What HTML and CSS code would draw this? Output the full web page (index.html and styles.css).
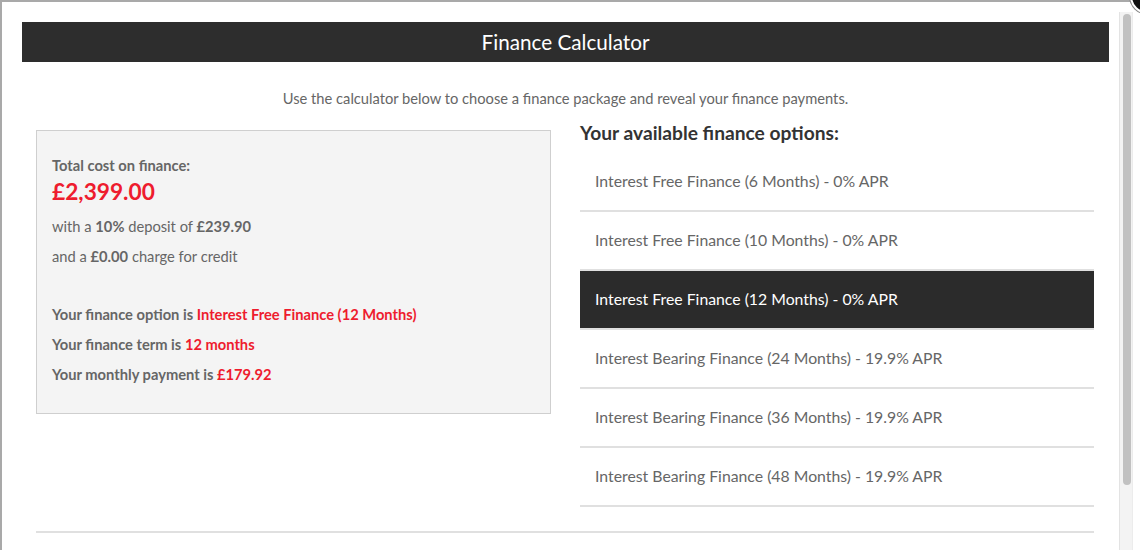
FILE: index.html
```html
<!DOCTYPE html>
<html lang="en">
<head>
<meta charset="utf-8">
<title>Finance Calculator</title>
<link rel="stylesheet" href="styles.css">
</head>
<body>
<div class="frame">
  <div class="content">
    <h1 class="title-bar">Finance Calculator</h1>
    <p class="intro">Use the calculator below to choose a finance package and reveal your finance payments.</p>
    <div class="calc">
      <div class="summary">
        <p class="label">Total cost on finance:</p>
        <p class="total">£2,399.00</p>
        <p class="line">with a <b>10%</b> deposit of <b>£239.90</b></p>
        <p class="line">and a <b>£0.00</b> charge for credit</p>
        <div class="details">
          <p class="line strong">Your finance option is <span class="red">Interest Free Finance (12 Months)</span></p>
          <p class="line strong">Your finance term is <span class="red">12 months</span></p>
          <p class="line strong">Your monthly payment is <span class="red">£179.92</span></p>
        </div>
      </div>
      <div class="options">
        <h2 class="options-title">Your available finance options:</h2>
        <ul class="option-list">
          <li class="option">Interest Free Finance (6 Months) - 0% APR</li>
          <li class="option">Interest Free Finance (10 Months) - 0% APR</li>
          <li class="option selected">Interest Free Finance (12 Months) - 0% APR</li>
          <li class="option">Interest Bearing Finance (24 Months) - 19.9% APR</li>
          <li class="option">Interest Bearing Finance (36 Months) - 19.9% APR</li>
          <li class="option">Interest Bearing Finance (48 Months) - 19.9% APR</li>
        </ul>
      </div>
    </div>
    <hr class="divider">
  </div>
  <div class="scrollbar"><div class="thumb"></div></div>
</div>
<div class="close"></div>
</body>
</html>
```

FILE: styles.css
```css
html, body {
  margin: 0;
  padding: 0;
  width: 1140px;
  height: 550px;
  overflow: hidden;
  background: #ffffff;
  font-family: Lato, "Open Sans", "Liberation Sans", sans-serif;
}

.frame {
  display: flex;
  height: 548px;
  border-top: 2px solid #a9a9a9;
  border-left: 2px solid #a9a9a9;
  background: #ffffff;
}

.content {
  width: 1087px;
  padding: 20px 10px 0 20px;
}

.title-bar {
  margin: 0;
  height: 40px;
  line-height: 40px;
  background: #2d2d2d;
  color: #ffffff;
  font-size: 20.7px;
  font-weight: 400;
  text-align: center;
}

.intro {
  margin: 26px 0 0;
  line-height: 20px;
  font-size: 14.7px;
  color: #666666;
  text-align: center;
}

.calc {
  display: grid;
  grid-template-columns: 515px 514px;
  column-gap: 29px;
  align-items: start;
  margin: 13px 15px 0 14px;
}

.summary {
  margin-top: 9px;
  background: #f4f4f4;
  border: 1px solid #cfcfcf;
  padding: 24px 15px 24px 15px;
  color: #666666;
  font-size: 14.7px;
}

.summary p {
  margin: 0;
}

.label {
  line-height: 20px;
  font-weight: 700;
}

.total {
  line-height: 28px;
  margin-top: 3px !important;
  margin-bottom: 5px !important;
  font-size: 22.7px;
  font-weight: 700;
  color: #ee1c2e;
}

.line {
  line-height: 30px;
}

.line b {
  font-weight: 700;
}

.details {
  margin-top: 28px;
}

.strong {
  font-weight: 700;
}

.red {
  color: #ee1c2e;
}

.options-title {
  margin: 0;
  line-height: 24px;
  font-size: 19.2px;
  font-weight: 700;
  color: #333333;
}

.option-list {
  list-style: none;
  margin: 8px 0 0;
  padding: 0;
}

.option {
  height: 57px;
  line-height: 56px;
  padding-left: 15px;
  font-size: 15.8px;
  color: #666666;
  border-bottom: 2px solid #e0e0e0;
}

.option.selected {
  background: #2b2b2b;
  color: #ffffff;
}

.divider {
  margin: 24px 15px 0 14px;
  border: 0;
  border-top: 2px solid #e0e0e0;
}

.scrollbar {
  width: 14px;
  margin-top: 10px;
  background: #f3f3f3;
  border-left: 1px solid #e3e3e3;
  border-right: 1px solid #ececec;
  padding: 2px 2px 0 3px;
  box-sizing: border-box;
}

.thumb {
  width: 8px;
  height: 471px;
  border-radius: 4px;
  background: #c1c1c1;
}

.close {
  position: absolute;
  left: 1130px;
  top: -22px;
  width: 32px;
  height: 32px;
  border-radius: 50%;
  background: #111111;
  border: 2px solid #ffffff;
  box-shadow: 0 0 0 1px #888888;
}
```
